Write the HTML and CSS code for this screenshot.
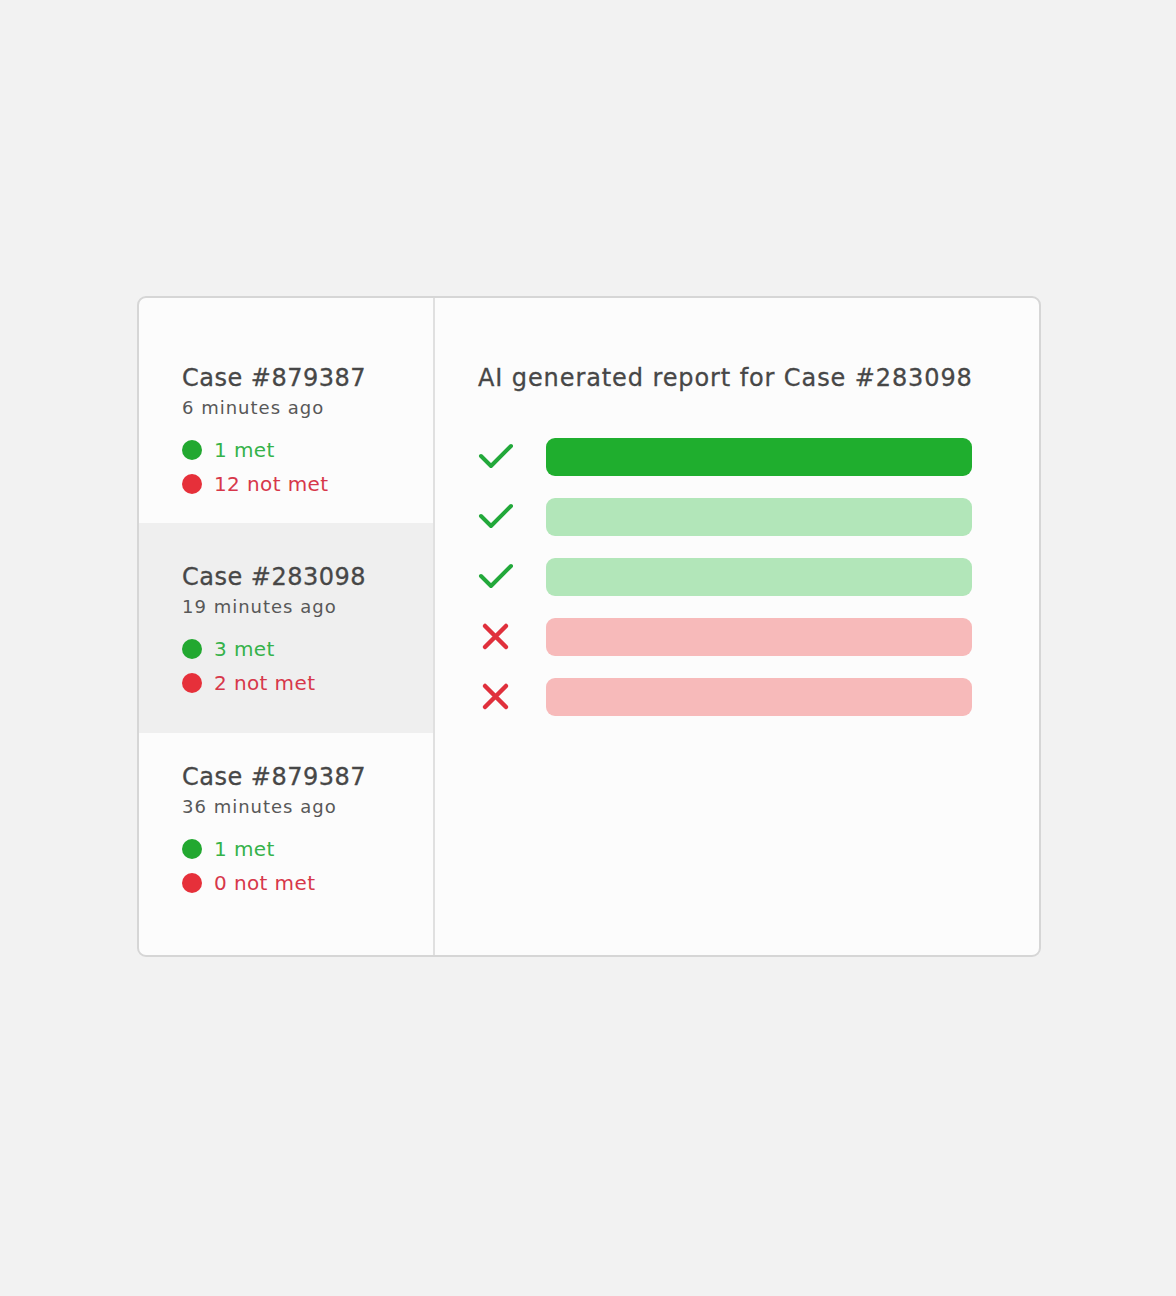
FILE: index.html
```html
<!DOCTYPE html>
<html lang="en">
<head>
<meta charset="utf-8">
<title>AI case report</title>
<link rel="stylesheet" href="styles.css">
</head>
<body>
<div class="card">
  <aside class="sidebar">
    <div class="case">
      <div class="case-title">Case #879387</div>
      <div class="case-time">6 minutes ago</div>
      <div class="stat met"><span class="dot"></span>1 met</div>
      <div class="stat notmet"><span class="dot"></span>12 not met</div>
    </div>
    <div class="case active">
      <div class="case-title">Case #283098</div>
      <div class="case-time">19 minutes ago</div>
      <div class="stat met"><span class="dot"></span>3 met</div>
      <div class="stat notmet"><span class="dot"></span>2 not met</div>
    </div>
    <div class="case">
      <div class="case-title">Case #879387</div>
      <div class="case-time">36 minutes ago</div>
      <div class="stat met"><span class="dot"></span>1 met</div>
      <div class="stat notmet"><span class="dot"></span>0 not met</div>
    </div>
  </aside>
  <main class="report">
    <h1 class="report-title">AI generated report for Case #283098</h1>
    <div class="rows">
      <div class="row">
        <svg class="icon" viewBox="0 0 36 38"><path class="check" d="M3 18 L13 28 L33 8"/></svg>
        <div class="bar bar-strong"></div>
      </div>
      <div class="row">
        <svg class="icon" viewBox="0 0 36 38"><path class="check" d="M3 18 L13 28 L33 8"/></svg>
        <div class="bar bar-green"></div>
      </div>
      <div class="row">
        <svg class="icon" viewBox="0 0 36 38"><path class="check" d="M3 18 L13 28 L33 8"/></svg>
        <div class="bar bar-green"></div>
      </div>
      <div class="row">
        <svg class="icon" viewBox="0 0 36 38"><path class="cross" d="M7 8 L28 29 M28 8 L7 29"/></svg>
        <div class="bar bar-red"></div>
      </div>
      <div class="row">
        <svg class="icon" viewBox="0 0 36 38"><path class="cross" d="M7 8 L28 29 M28 8 L7 29"/></svg>
        <div class="bar bar-red"></div>
      </div>
    </div>
  </main>
</div>
</body>
</html>
```

FILE: styles.css
```css
html, body {
  margin: 0;
  padding: 0;
}
body {
  background: #f2f2f2;
  font-family: "DejaVu Sans", "Noto Sans", sans-serif;
  color: #444;
}
.card {
  box-sizing: border-box;
  width: 904px;
  height: 661px;
  margin: 296px auto 0;
  position: relative;
  left: 1px;
  background: #fcfcfc;
  border: 2px solid #d6d6d6;
  border-radius: 9px;
  display: flex;
  overflow: hidden;
}
.sidebar {
  width: 294px;
  flex: none;
  border-right: 2px solid #e0e0e0;
  display: flex;
  flex-direction: column;
}
.case {
  box-sizing: border-box;
  padding-left: 43px;
}
.case:nth-child(1) {
  height: 225px;
  padding-top: 65px;
}
.case:nth-child(2) {
  height: 210px;
  padding-top: 39px;
}
.case:nth-child(3) {
  flex: 1;
  padding-top: 29px;
}
.case.active {
  background: #efefef;
}
.case-title {
  font-size: 24px;
  line-height: 30px;
  color: #474747;
  letter-spacing: 0.5px;
  -webkit-text-stroke: 0.3px #474747;
}
.case-time {
  font-size: 18px;
  line-height: 24px;
  margin-top: 3px;
  color: #585858;
  letter-spacing: 1px;
}
.stat {
  display: flex;
  align-items: center;
  font-size: 20px;
  line-height: 34px;
  height: 34px;
  letter-spacing: 0.4px;
}
.case-time + .stat {
  margin-top: 13px;
}
.dot {
  width: 20px;
  height: 20px;
  border-radius: 50%;
  margin-right: 12px;
  flex: none;
}
.met { color: #35b24a; }
.met .dot { background: #22a830; }
.notmet { color: #d7374a; }
.notmet .dot { background: #e6303a; }

.report {
  flex: 1;
  padding: 65px 0 0 43px;
}
.report-title {
  margin: 0;
  font-size: 24px;
  line-height: 30px;
  font-weight: normal;
  color: #474747;
  letter-spacing: 0.9px;
  -webkit-text-stroke: 0.3px #474747;
  white-space: nowrap;
}
.rows {
  margin-top: 45px;
  display: flex;
  flex-direction: column;
  gap: 22px;
}
.row {
  display: flex;
  align-items: center;
  height: 38px;
}
.icon {
  width: 36px;
  height: 38px;
  flex: none;
  margin-right: 32px;
}
.check {
  fill: none;
  stroke: #22a83a;
  stroke-width: 4;
  stroke-linecap: round;
  stroke-linejoin: round;
}
.cross {
  fill: none;
  stroke: #e0303c;
  stroke-width: 4.5;
  stroke-linecap: round;
}
.bar {
  width: 426px;
  height: 38px;
  border-radius: 9px;
}
.bar-strong { background: #1fae2e; }
.bar-green { background: #b2e6b9; }
.bar-red { background: #f7baba; }
```
